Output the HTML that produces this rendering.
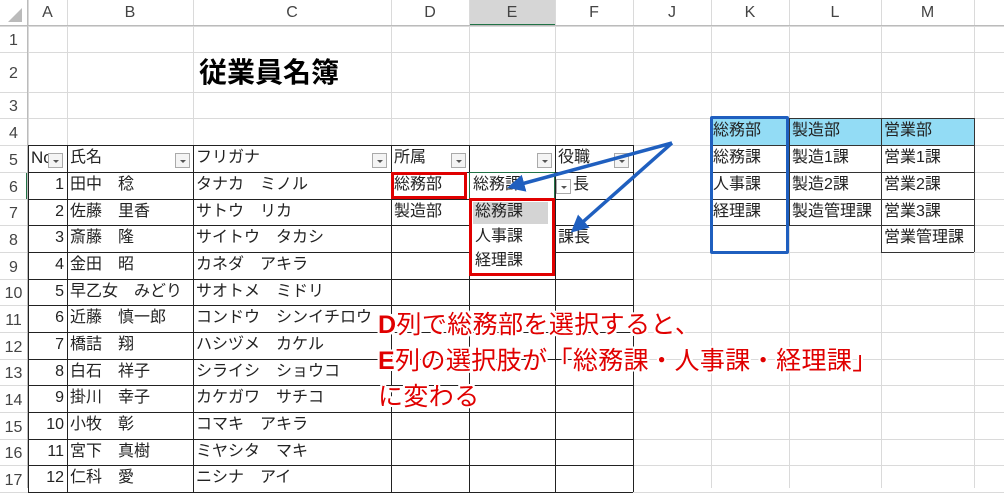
<!DOCTYPE html>
<html><head><meta charset="utf-8">
<style>
body{margin:0;width:1004px;height:488px;overflow:hidden;background:#fff;position:relative;font-family:"Liberation Sans","Noto Sans CJK JP",sans-serif;}
.a{position:absolute;}
.t{position:absolute;font-size:16px;color:#222;white-space:nowrap;line-height:26px;}
.hd{position:absolute;font-size:16px;color:#444;text-align:center;line-height:26px;}
.fb{position:absolute;width:15px;height:15px;border:1px solid #aaa;background:#f4f4f4;box-sizing:border-box;}
.fb:after{content:"";position:absolute;left:4px;top:6px;border-left:3px solid transparent;border-right:3px solid transparent;border-top:3px solid #555;}
.ov{position:absolute;left:378px;font-size:25px;letter-spacing:0.4px;color:#e00000;white-space:nowrap;line-height:30px;text-shadow:-2px 0 #fff,2px 0 #fff,0 -2px #fff,0 2px #fff,-2px -2px #fff,2px 2px #fff,-2px 2px #fff,2px -2px #fff;}
</style></head><body>
<div id="g"></div>
<script>
var cols=[0,28,67,193,391,469,555,633,711,789,881,974,1004];
var names=["","A","B","C","D","E","F","J","K","L","M",""];
var rows=[0,26,52,92,118,145,172,199,225,252,279,305,332,359,385,412,439,465,492];
var h="";
function L(x,y,w,hh,c){h+='<div class="a" style="left:'+x+'px;top:'+y+'px;width:'+w+'px;height:'+hh+'px;background:'+c+'"></div>';}
L(0,0,1004,26,"#fff");L(0,0,28,488,"#fff");
L(469,0,86,26,"#d6d6d6");L(469,24,86,2,"#217346");
L(26,172,2,27,"#217346");
for(var i=1;i<cols.length;i++)L(cols[i],0,1,488,"#dadada");
for(var j=1;j<rows.length;j++)L(0,rows[j],1004,1,"#dadada");
L(0,25,1004,1,"#bbb");L(27,0,1,488,"#bbb");
h+='<div class="a" style="left:8px;top:8px;width:0;height:0;border-left:14px solid transparent;border-bottom:14px solid #bbb"></div>';
for(var i=1;i<11;i++)h+='<div class="hd" style="left:'+cols[i]+'px;width:'+(cols[i+1]-cols[i])+'px;top:0">'+names[i]+'</div>';
for(var j=1;j<18;j++)h+='<div class="hd" style="left:0;width:27px;top:'+rows[j]+'px;height:'+(rows[j+1]-rows[j])+'px;line-height:'+(rows[j+1]-rows[j]+4)+'px">'+j+'</div>';
for(var j=5;j<=18;j++)L(28,rows[j],605,1,"#222");
[28,67,193,391,469,555,633].forEach(function(x){L(x,145,1,347,"#222");});
L(711,118,263,27,"#93dcf5");
for(var j=4;j<=8;j++)L(711,rows[j],263,1,"#333");
L(881,252,93,1,"#333");
[789,881,974].forEach(function(x){L(x,118,1,x==789?107:134,"#333");});
L(881,225,1,27,"#333");
h+='<div class="a" style="left:710px;top:116px;width:79px;height:138px;border:3px solid #1f5fbf;box-sizing:border-box;border-radius:2px"></div>';
function T(x,y,s,ex){h+='<div class="t" style="left:'+x+'px;top:'+y+'px;'+(ex||'')+'">'+s+'</div>';}
T(713,118,"総務部");T(792,118,"製造部");T(884,118,"営業部");
T(713,145,"総務課");T(792,145,"製造1課");T(884,145,"営業1課");
T(713,172,"人事課");T(792,172,"製造2課");T(884,172,"営業2課");
T(713,199,"経理課");T(792,199,"製造管理課");T(884,199,"営業3課");
T(884,225,"営業管理課");
h+='<div class="a" style="left:199px;top:54px;font-size:28px;font-weight:bold;color:#000;line-height:38px">従業員名簿</div>';
T(31,145,"No",'font-size:17px;width:18px;overflow:hidden');T(70,145,"氏名");T(196,145,"フリガナ");T(394,145,"所属");T(558,145,"役職");
[[48,153],[175,153],[372,153],[451,153],[537,153],[614,153]].forEach(function(p){h+='<div class="fb" style="left:'+p[0]+'px;top:'+p[1]+'px"></div>';});
var d=[["田中　稔","タナカ　ミノル"],["佐藤　里香","サトウ　リカ"],["斎藤　隆","サイトウ　タカシ"],["金田　昭","カネダ　アキラ"],["早乙女　みどり","サオトメ　ミドリ"],["近藤　慎一郎","コンドウ　シンイチロウ"],["橋詰　翔","ハシヅメ　カケル"],["白石　祥子","シライシ　ショウコ"],["掛川　幸子","カケガワ　サチコ"],["小牧　彰","コマキ　アキラ"],["宮下　真樹","ミヤシタ　マキ"],["仁科　愛","ニシナ　アイ"]];
for(var k=0;k<12;k++){var y=rows[6+k];T(28,y,String(k+1),'width:36px;text-align:right');T(70,y,d[k][0]);T(196,y,d[k][1]);}
T(394,172,"総務部");T(394,199,"製造部");T(473,172,"総務課");T(573,172,"長");T(558,225,"課長");
h+='<div class="a" style="left:469px;top:172px;width:86px;height:28px;border:1px solid #217346;box-sizing:border-box"></div>';
h+='<div class="fb" style="left:556px;top:179px;background:#fff"></div>';
h+='<div class="a" style="left:391px;top:172px;width:76px;height:27px;border:3px solid #e00000;box-sizing:border-box"></div>';
h+='<div class="a" style="left:469px;top:198px;width:86px;height:78px;border:3px solid #e00000;box-sizing:border-box;background:#fff"></div>';
L(473,202,75,22,"#d4d4d4");
T(475,199,"総務課");T(475,224,"人事課");T(475,248,"経理課");
document.getElementById("g").innerHTML=h;
</script>
<svg class="a" style="left:0;top:0" width="1004" height="488">
<defs><marker id="m" markerWidth="5" markerHeight="5" refX="3" refY="2.5" orient="auto"><path d="M0,0 L5,2.5 L0,5 Z" fill="#1f5fbf"/></marker></defs>
<line x1="672" y1="143" x2="514" y2="186" stroke="#1f5fbf" stroke-width="3.5" marker-end="url(#m)"/>
<line x1="672" y1="143" x2="576" y2="228" stroke="#1f5fbf" stroke-width="3.5" marker-end="url(#m)"/>
</svg>
<div class="ov" style="top:310px"><b>D</b>列で総務部を選択すると、</div>
<div class="ov" style="top:346px"><b>E</b>列の選択肢が「総務課・人事課・経理課」</div>
<div class="ov" style="top:382px">に変わる</div>
</body></html>
